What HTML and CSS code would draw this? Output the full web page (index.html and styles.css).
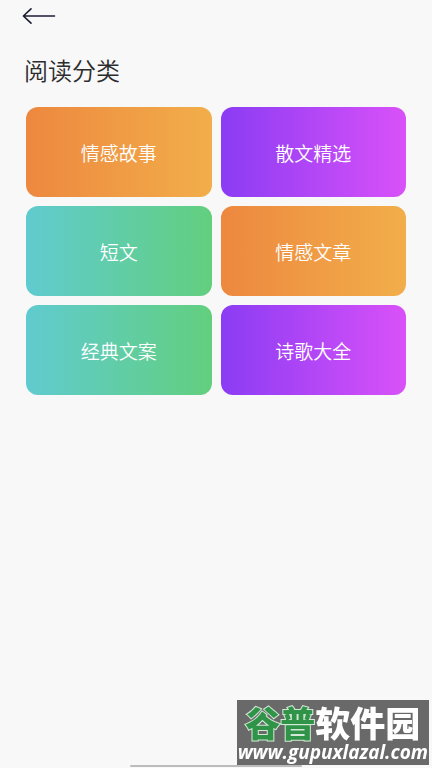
FILE: index.html
```html
<!DOCTYPE html>
<html lang="zh-CN">
<head>
<meta charset="utf-8">
<meta name="viewport" content="width=device-width, initial-scale=1">
<title>阅读分类</title>
<link rel="stylesheet" href="styles.css">
</head>
<body>
<header class="topbar">
  <button class="back" type="button" aria-label="返回">
    <svg width="34" height="18" viewBox="0 0 34 18" fill="none" stroke="#1c1c34" stroke-width="1.6" stroke-linecap="round" stroke-linejoin="round" aria-hidden="true">
      <path d="M9 1.8L1.4 9L9 16.2M1.4 9H32.5"/>
    </svg>
  </button>
</header>
<main class="page">
  <h1 class="title">阅读分类</h1>
  <nav class="grid">
    <a class="card orange" href="#">情感故事</a>
    <a class="card purple" href="#">散文精选</a>
    <a class="card green" href="#">短文</a>
    <a class="card orange" href="#">情感文章</a>
    <a class="card green" href="#">经典文案</a>
    <a class="card purple" href="#">诗歌大全</a>
  </nav>
</main>
<div class="home-bar"></div>
<aside class="watermark">
  <p class="brand"><span class="brand-green">谷普</span>软件园</p>
  <p class="site">www.gupuxlazal.com</p>
</aside>
</body>
</html>
```
FILE: styles.css
```css
* {
  box-sizing: border-box;
}

body {
  margin: 0;
  min-height: 100vh;
  background: #f8f8f8;
  color: #2c2c2e;
  font-family: "Noto Sans CJK SC", sans-serif;
}

.topbar {
  display: flex;
  height: 32px;
  padding: 0 22px;
  align-items: center;
}

.back {
  display: flex;
  padding: 0;
  border: 0;
  background: none;
}

.page {
  padding: 20px 24px;
}

.title {
  margin: 0 0 19px;
  font-size: 24px;
  font-weight: 350;
  line-height: 36px;
}

.grid {
  display: grid;
  grid-template-columns: 1fr 1fr;
  gap: 9px;
  padding: 0 2px;
}

.card {
  display: flex;
  height: 90px;
  align-items: center;
  justify-content: center;
  border-radius: 12px;
  color: #fff;
  font-size: 19px;
  font-weight: 350;
  text-decoration: none;
}

.orange {
  background: linear-gradient(90deg, #ed883f, #f2ae4a);
}

.purple {
  background: linear-gradient(90deg, #8b3cf4, #d951f8);
}

.green {
  background: linear-gradient(90deg, #60cbcf, #62cf7e);
}

.home-bar {
  position: fixed;
  bottom: 1px;
  left: 30%;
  width: 40%;
  height: 2px;
  border-radius: 1px;
  background: #bcbcbc;
}

.watermark {
  position: fixed;
  right: 3px;
  bottom: 3px;
  padding: 4px 1px 0;
  background: #696969;
  color: #fff;
  text-align: center;
  white-space: nowrap;
}

.brand {
  margin: 0;
  font-size: 35px;
  font-weight: 900;
  line-height: 36px;
}

.brand-green {
  color: #2f9448;
  paint-order: stroke fill;
  -webkit-text-stroke: 2px #d3e8d6;
}

.site {
  margin: 0;
  font-family: "Open Sans", sans-serif;
  font-size: 19px;
  font-style: italic;
  font-weight: 700;
  line-height: 25px;
}
```
